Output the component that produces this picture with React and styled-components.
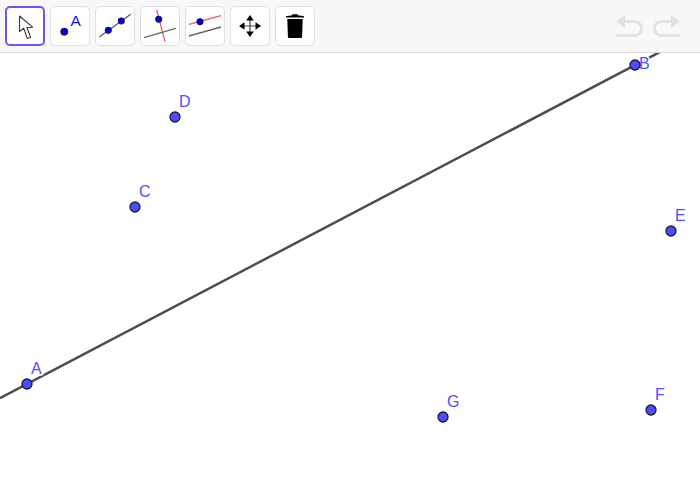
import React from "react";
import styled, { createGlobalStyle } from "styled-components";

const Global = createGlobalStyle`
  html, body { margin: 0; padding: 0; background: #fff; overflow: hidden; }
  #root { width: 700px; height: 500px; }
`;
const Page = styled.div`
  width: 700px; height: 500px; display: flex; flex-direction: column;
  font-family: "Liberation Sans", Arial, sans-serif;
`;
const Toolbar = styled.div`
  height: 53px; flex: none; box-sizing: border-box; padding: 6px 19px 0 5px;
  display: flex; justify-content: space-between; align-items: flex-start;
  background: #f8f8f8; border-bottom: 1px solid #dedede;
`;
const Tools = styled.div`display: flex; gap: 5px;`;
const ToolButton = styled.div`
  width: 40px; height: 40px; box-sizing: border-box; background: #fff; border-radius: 5px;
  border: ${p => (p.$active ? "2px solid #6557ff" : "1px solid #e0e0e0")};
  display: flex; align-items: center; justify-content: center;
  & > svg { display: block; flex: none; }
`;
const History = styled.div`display: flex; gap: 6px; padding-top: 9px;`;
const Canvas = styled.svg`flex: 1; display: block; width: 700px; height: 447px;`;
const Label = styled.text`
  font-family: "Liberation Sans", Arial, sans-serif; font-size: 16px; fill: #5050ff;
  paint-order: stroke; stroke: #fff; stroke-width: 3px; stroke-linejoin: round;
`;
const ToolIconLabel = styled.text`
  font-family: "Liberation Sans", Arial, sans-serif; font-size: 15.5px; fill: #0e0eff;
`;

const P = ({ x, y }) => <circle cx={x} cy={y} r="3.2" fill="#0000e0" stroke="#111" strokeWidth=".7" />;

const icons = [
  <svg key="a" width="36" height="36" viewBox="0 0 36 36">
    <path d="M12.5 8v15.500l4.200-3.400 3.600 10.400 3.300-1.300-3.700-9.700 5.600-.300z" fill="#fff" stroke="#3a3a3a" strokeWidth="1.100" strokeLinejoin="round" />
  </svg>,
  <svg key="b" width="38" height="38" viewBox="0 0 38 38">
    <circle cx="13.300" cy="24.700" r="3.600" fill="#0000e0" stroke="#111" strokeWidth=".8" />
    <ToolIconLabel x="19.600" y="18.500">A</ToolIconLabel>
  </svg>,
  <svg key="c" width="38" height="38" viewBox="0 0 38 38">
    <line x1="3.300" y1="30" x2="34.700" y2="7.300" stroke="#555" strokeWidth="1.100" />
    <P x={12.300} y={23.300} /><P x={25.300} y={14} />
  </svg>,
  <svg key="d" width="38" height="38" viewBox="0 0 38 38">
    <line x1="15.700" y1="3" x2="24" y2="34.700" stroke="#f6505f" strokeWidth="1.200" />
    <line x1="3" y1="30.700" x2="34.700" y2="21.300" stroke="#666" strokeWidth="1.300" />
    <P x={17.700} y={12.300} />
  </svg>,
  <svg key="e" width="38" height="38" viewBox="0 0 38 38">
    <line x1="3" y1="17.300" x2="35" y2="8.700" stroke="#f6505f" strokeWidth="1.200" />
    <line x1="3" y1="29" x2="35" y2="20" stroke="#666" strokeWidth="1.300" />
    <P x={14} y={14.700} />
  </svg>,
  <svg key="f" width="38" height="38" viewBox="0 0 38 38">
    <path d="M19 12v14M12 19h14" stroke="#444" strokeWidth="1.200" />
    <path d="M19 8l3.800 5.500h-7.600zM19 30l-3.800-5.500h7.600zM8 19l5.500-3.800v7.600zM30 19l-5.500 3.800v-7.600z" fill="#000" />
  </svg>,
  <svg key="g" width="38" height="38" viewBox="0 0 38 38">
    <path d="M10 9.300c2-.4 4-.7 5.500-.8l1-1.200h5l1 1.200c1.500.1 3.500.4 5.500.8v1.200H10z" fill="#000" />
    <path d="M11.300 12h15.400l-.6 17.500c0 1.100-.7 1.500-1.700 1.500H13.600c-1 0-1.700-.4-1.700-1.500z" fill="#000" />
  </svg>,
];

const points = [
  ["A", 27, 331, 31, 321], ["B", 635, 12, 639, 16], ["C", 135, 154, 139, 144], ["D", 175, 64, 179, 54],
  ["E", 671, 178, 675, 168], ["F", 651, 357, 655, 347], ["G", 443, 364, 447, 354],
];

export default function App() {
  return (
    <Page>
      <Global />
      <Toolbar>
        <Tools>
          {icons.map((icon, i) => <ToolButton key={i} $active={i === 0}>{icon}</ToolButton>)}
        </Tools>
        <History>
          <svg width="30" height="24" viewBox="0 0 30 24" fill="none">
            <path d="M1 6.500L10 0v13z" fill="#e2e2e2" />
            <path d="M9 6.500h10.500a7 7 0 0 1 0 14H1" stroke="#e2e2e2" strokeWidth="3" />
          </svg>
          <svg width="30" height="24" viewBox="0 0 30 24" fill="none">
            <path d="M29 6.500L20 0v13z" fill="#e2e2e2" />
            <path d="M21 6.500H10.500a7 7 0 0 0 0 14H29" stroke="#e2e2e2" strokeWidth="3" />
          </svg>
        </History>
      </Toolbar>
      <Canvas viewBox="0 0 700 447">
        <line x1="0" y1="345.200" x2="700" y2="-22" stroke="#4d4d4d" strokeWidth="2.500" />
        {points.map(([name, x, y, lx, ly]) => (
          <g key={name}>
            <Label x={lx} y={ly}>{name}</Label>
            <circle cx={x} cy={y} r="5" fill="#4d4dff" stroke="#1a1a33" strokeWidth="1.300" />
          </g>
        ))}
      </Canvas>
    </Page>
  );
}
